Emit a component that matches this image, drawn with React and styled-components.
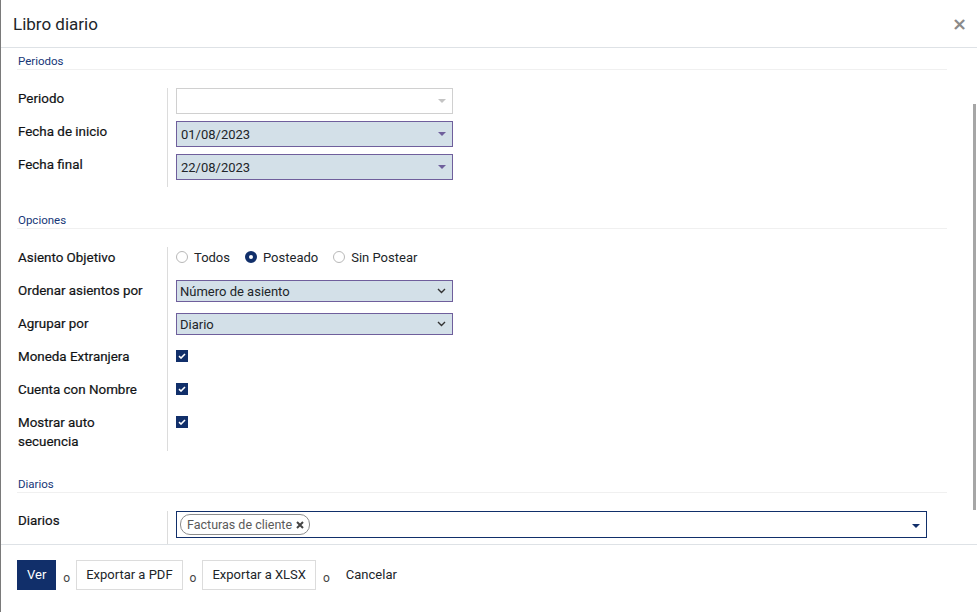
import React from 'react'
import styled, { createGlobalStyle } from 'styled-components'

const Global = createGlobalStyle`
  html, body {
    margin: 0;
    padding: 0;
    background: #fff;
  }
  body {
    font-family: Roboto, "Noto Sans", "Liberation Sans", sans-serif;
    font-size: 13px;
    color: #212529;
  }
`

const NAVY = '#112f6a'
const FIELD_BG = '#d3e0e8'
const FIELD_BORDER = '#6f5f9c'

const Modal = styled.div`
  display: flex;
  flex-direction: column;
  height: 612px;
  width: 977px;
  box-sizing: border-box;
  border-left: 1px solid #7a7a7a;
  background: #fff;
  overflow: hidden;
`

const Header = styled.header`
  display: flex;
  align-items: center;
  justify-content: space-between;
  height: 47px;
  flex: none;
  padding: 0 10px 0 12px;
  border-bottom: 1px solid #dee2e6;
`

const Title = styled.h4`
  margin: 0;
  font-size: 17px;
  font-weight: 400;
  color: #212529;
`

const Close = styled.button`
  border: 0;
  background: none;
  padding: 0;
  color: #8a8a8a;
  font-size: 18px;
  font-weight: 700;
  line-height: 1;
  cursor: pointer;
  font-family: "DejaVu Sans", sans-serif;
`

const Body = styled.div`
  position: relative;
  flex: 1;
  overflow: hidden;
  padding: 5px 30px 0 16px;
`

const Thumb = styled.div`
  position: absolute;
  right: 1px;
  top: 56px;
  width: 3px;
  height: 406px;
  background: #a6a6a6;
`

const Section = styled.section`
  margin-bottom: 25px;
`

const SectionTitle = styled.div`
  font-size: 11.5px;
  font-weight: 400;
  line-height: 16px;
  color: #163677;
  padding-left: 1px;
  border-bottom: 1px solid #f0f0f0;
  margin-bottom: 18px;
`

const Grid = styled.div`
  display: grid;
  grid-template-columns: 149px ${p => p.$wide ? '760px' : '286px'};
  padding-left: 1px;
`

const Label = styled.label`
  font-size: 13.4px;
  font-weight: 400;
  line-height: 19px;
  padding-top: ${p => p.$top || 0}px;
  min-height: 33px;
  box-sizing: border-box;
  padding-right: 16px;
  color: #111315;
  -webkit-text-stroke: 0.2px #111315;
`

const Value = styled.div`
  border-left: 1px solid #dcdcdc;
  padding-left: 8px;
  min-height: 33px;
  box-sizing: border-box;
`

const Dropdown = styled.div`
  position: relative;
  display: flex;
  align-items: center;
  height: 26px;
  box-sizing: border-box;
  padding: 0 20px 0 4px;
  border: 1px solid ${p => (p.$filled ? FIELD_BORDER : '#d0d0d0')};
  background: ${p => (p.$filled ? FIELD_BG : '#fff')};
  color: #212529;

  &::after {
    content: '';
    position: absolute;
    right: 6px;
    top: 50%;
    margin-top: -2px;
    border-left: 4px solid transparent;
    border-right: 4px solid transparent;
    border-top: 4px solid ${p => (p.$filled ? FIELD_BORDER : '#c4c4c4')};
  }
`

const Select = styled.div`
  display: flex;
  align-items: center;
  justify-content: space-between;
  height: 22px;
  box-sizing: border-box;
  padding: 0 6px 0 3px;
  border: 1px solid ${FIELD_BORDER};
  background: ${FIELD_BG};
  color: #212529;
`

const Radios = styled.div`
  display: flex;
  align-items: center;
  gap: 15px;
  height: 20px;
`

const Radio = styled.span`
  display: inline-flex;
  align-items: center;
  gap: 6px;
  color: #212529;

  &::before {
    content: '';
    width: 12px;
    height: 12px;
    box-sizing: border-box;
    border-radius: 50%;
    border: ${p => (p.$on ? `4px solid ${NAVY}` : '1px solid #b8b8b8')};
    background: #fff;
  }
`

const Check = styled.span`
  display: flex;
  align-items: center;
  justify-content: center;
  width: 12px;
  height: 12px;
  margin-top: 4px;
  background: ${NAVY};
`

const Tags = styled.div`
  position: relative;
  display: flex;
  align-items: center;
  height: 27px;
  box-sizing: border-box;
  padding: 0 20px 0 3px;
  border: 1px solid ${NAVY};

  &::after {
    content: '';
    position: absolute;
    right: 6px;
    top: 50%;
    margin-top: -1px;
    border-left: 4px solid transparent;
    border-right: 4px solid transparent;
    border-top: 4px solid ${NAVY};
  }
`

const Tag = styled.span`
  display: inline-flex;
  align-items: center;
  gap: 4px;
  height: 19px;
  padding: 0 5px 0 6px;
  border: 1px solid #8c8c8c;
  border-radius: 10px;
  color: #5a5a5a;
  font-size: 12.5px;
`

const Footer = styled.footer`
  display: flex;
  align-items: center;
  flex: none;
  height: 68px;
  padding: 0 16px 8px;
  box-sizing: border-box;
  border-top: 1px solid #dee2e6;
`

const Button = styled.button`
  height: 30px;
  padding: 0 9px;
  font-family: inherit;
  font-size: 13px;
  border: 1px solid ${p => (p.$primary ? NAVY : p.$link ? 'transparent' : '#dcdcdc')};
  background: ${p => (p.$primary ? NAVY : '#fff')};
  color: ${p => (p.$primary ? '#fff' : '#212529')};
  cursor: pointer;
`

const Or = styled.span`
  font-size: 12px;
  color: #444;
  padding: 6px 6px 0 7px;
`

const Chevron = () => (
  <svg width="9" height="6" viewBox="0 0 9 6" fill="none">
    <path d="M1 1l3.5 3.5L8 1" stroke="#333" strokeWidth="1.4" />
  </svg>
)

const Tick = () => (
  <svg width="8" height="6" viewBox="0 0 8 6" fill="none">
    <path d="M1 3.2l2 1.8L7 1" stroke="#fff" strokeWidth="1.6" />
  </svg>
)

const Cross = () => (
  <svg width="8" height="8" viewBox="0 0 8 8">
    <path d="M1 1l6 6M7 1L1 7" stroke="#444" strokeWidth="2" />
  </svg>
)

function Row({ label, top, children }) {
  return (
    <>
      <Label $top={top}>{label}</Label>
      <Value>{children}</Value>
    </>
  )
}

const checks = ['Moneda Extranjera', 'Cuenta con Nombre', 'Mostrar auto secuencia']

export default function App() {
  return (
    <Modal>
      <Global />
      <Header>
        <Title>Libro diario</Title>
        <Close aria-label="Cerrar">×</Close>
      </Header>

      <Body>
        <Section>
          <SectionTitle>Periodos</SectionTitle>
          <Grid>
            <Row label="Periodo" top={1}>
              <Dropdown />
            </Row>
            <Row label="Fecha de inicio" top={1}>
              <Dropdown $filled>01/08/2023</Dropdown>
            </Row>
            <Row label="Fecha final" top={1}>
              <Dropdown $filled>22/08/2023</Dropdown>
            </Row>
          </Grid>
        </Section>

        <Section>
          <SectionTitle>Opciones</SectionTitle>
          <Grid>
            <Row label="Asiento Objetivo" top={1}>
              <Radios>
                <Radio>Todos</Radio>
                <Radio $on>Posteado</Radio>
                <Radio>Sin Postear</Radio>
              </Radios>
            </Row>
            <Row label="Ordenar asientos por" top={1}>
              <Select>Número de asiento<Chevron /></Select>
            </Row>
            <Row label="Agrupar por" top={1}>
              <Select>Diario<Chevron /></Select>
            </Row>
            {checks.map(c => (
              <Row key={c} label={c} top={1}>
                <Check><Tick /></Check>
              </Row>
            ))}
          </Grid>
        </Section>

        <Section>
          <SectionTitle>Diarios</SectionTitle>
          <Grid $wide>
            <Row label="Diarios" top={0}>
              <Tags>
                <Tag>Facturas de cliente <Cross /></Tag>
              </Tags>
            </Row>
          </Grid>
        </Section>

        <Thumb />
      </Body>

      <Footer>
        <Button $primary>Ver</Button>
        <Or>o</Or>
        <Button>Exportar a PDF</Button>
        <Or>o</Or>
        <Button>Exportar a XLSX</Button>
        <Or>o</Or>
        <Button $link>Cancelar</Button>
      </Footer>
    </Modal>
  )
}
